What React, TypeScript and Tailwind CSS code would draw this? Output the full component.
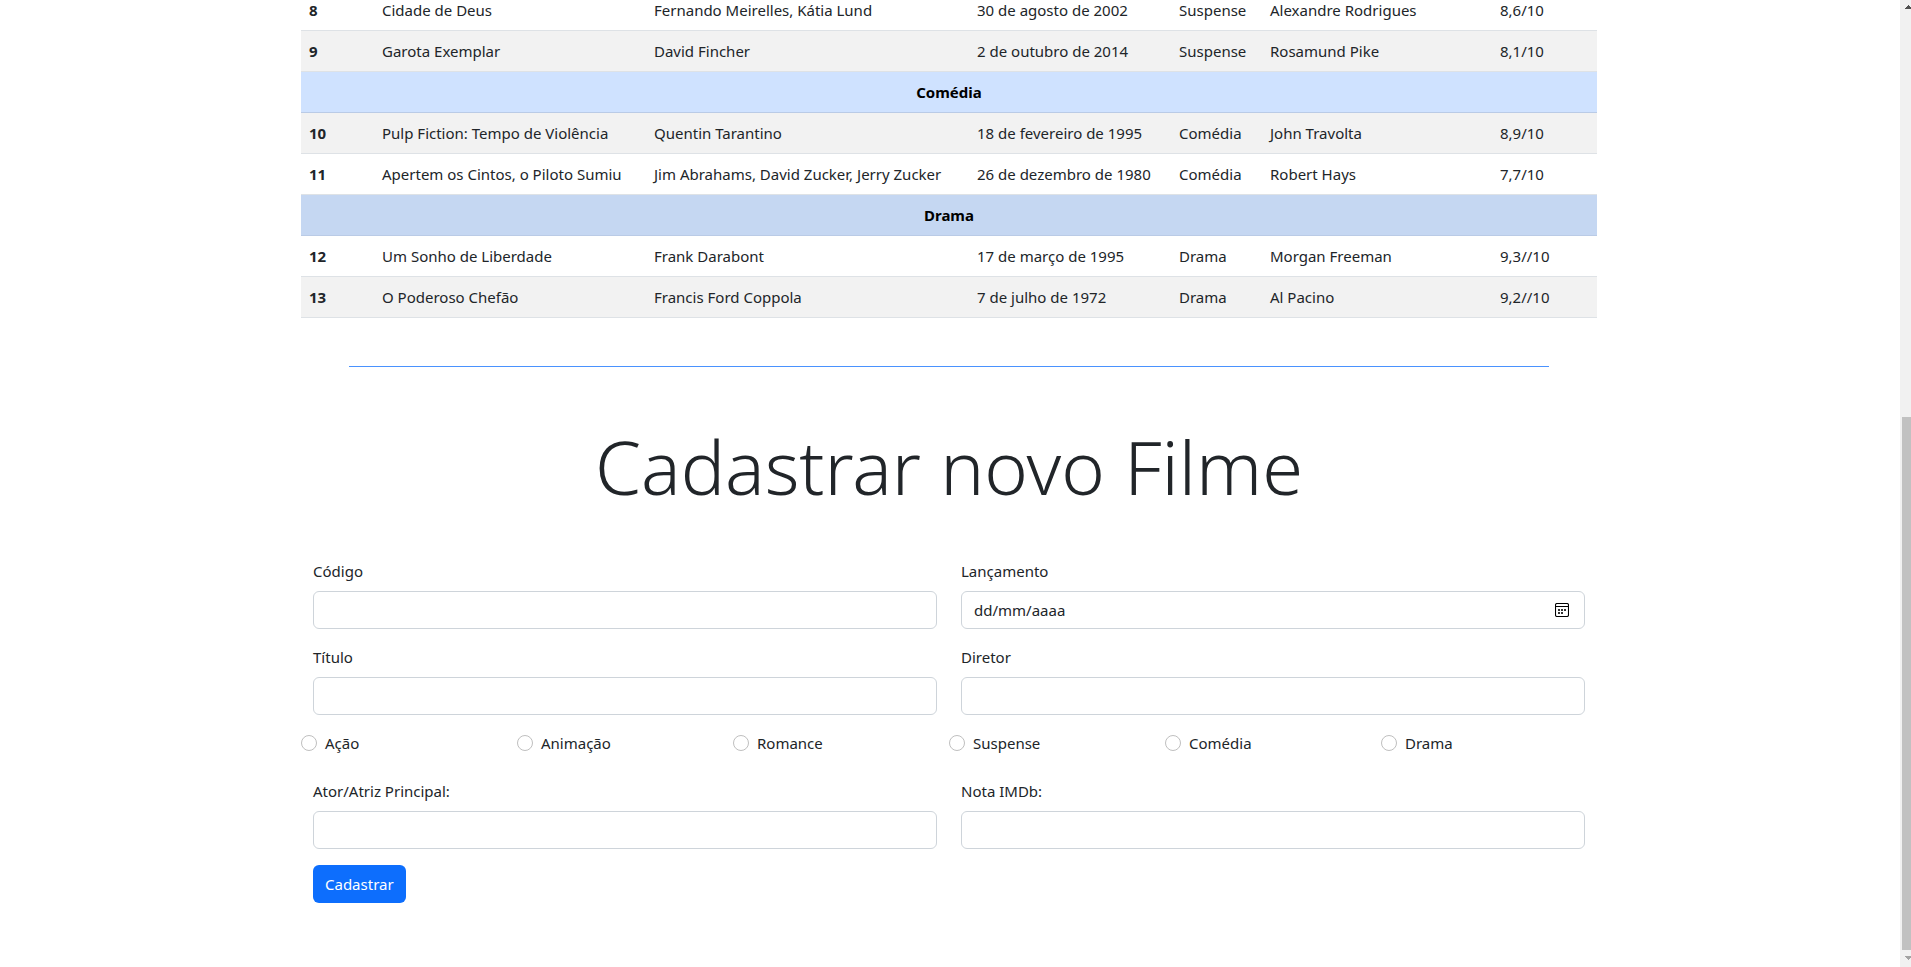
import React from "react";

type Movie = {
  code: string;
  title: string;
  director: string;
  release: string;
  genre: string;
  actor: string;
  rating: string;
};

type Group = { heading?: string; headingClass?: string; movies: Movie[]; stripe: number };

const groups: Group[] = [
  {
    stripe: 1,
    movies: [
      { code: "8", title: "Cidade de Deus", director: "Fernando Meirelles, Kátia Lund", release: "30 de agosto de 2002", genre: "Suspense", actor: "Alexandre Rodrigues", rating: "8,6/10" },
      { code: "9", title: "Garota Exemplar", director: "David Fincher", release: "2 de outubro de 2014", genre: "Suspense", actor: "Rosamund Pike", rating: "8,1/10" },
    ],
  },
  {
    heading: "Comédia",
    headingClass: "bg-[#cfe2ff]",
    stripe: 0,
    movies: [
      { code: "10", title: "Pulp Fiction: Tempo de Violência", director: "Quentin Tarantino", release: "18 de fevereiro de 1995", genre: "Comédia", actor: "John Travolta", rating: "8,9/10" },
      { code: "11", title: "Apertem os Cintos, o Piloto Sumiu", director: "Jim Abrahams, David Zucker, Jerry Zucker", release: "26 de dezembro de 1980", genre: "Comédia", actor: "Robert Hays", rating: "7,7/10" },
    ],
  },
  {
    heading: "Drama",
    headingClass: "bg-[#c5d7f2]",
    stripe: 1,
    movies: [
      { code: "12", title: "Um Sonho de Liberdade", director: "Frank Darabont", release: "17 de março de 1995", genre: "Drama", actor: "Morgan Freeman", rating: "9,3//10" },
      { code: "13", title: "O Poderoso Chefão", director: "Francis Ford Coppola", release: "7 de julho de 1972", genre: "Drama", actor: "Al Pacino", rating: "9,2//10" },
    ],
  },
];

const genres = ["Ação", "Animação", "Romance", "Suspense", "Comédia", "Drama"];

const inputClass =
  "block h-[38px] w-full rounded-md border border-[#ced4da] bg-white px-3 text-[#212529] placeholder:text-[#212529] outline-none focus:border-[#86b7fe]";

function MovieTable() {
  return (
    <table className="-mt-2.5 w-full table-fixed border-separate border-spacing-0 whitespace-nowrap text-left">
      <colgroup>
        <col className="w-[73px]" />
        <col className="w-[272px]" />
        <col className="w-[323px]" />
        <col className="w-[202px]" />
        <col className="w-[91px]" />
        <col className="w-[230px]" />
        <col />
      </colgroup>
      {groups.map((group, i) => (
        <tbody key={i}>
          {group.heading && (
            <tr className={group.headingClass}>
              <th colSpan={7} scope="rowgroup" className="h-[41px] border-b border-[#bacbe6] px-2 text-center font-bold text-black">
                {group.heading}
              </th>
            </tr>
          )}
          {group.movies.map((m, j) => (
            <tr key={m.code} className={j === group.stripe ? "bg-[#f2f2f2]" : "bg-white"}>
              <th scope="row" className="h-[41px] border-b border-[#dee2e6] px-2 font-bold">{m.code}</th>
              <td className="border-b border-[#dee2e6] px-2">{m.title}</td>
              <td className="border-b border-[#dee2e6] px-2">{m.director}</td>
              <td className="border-b border-[#dee2e6] px-2">{m.release}</td>
              <td className="border-b border-[#dee2e6] px-2">{m.genre}</td>
              <td className="border-b border-[#dee2e6] px-2">{m.actor}</td>
              <td className="border-b border-[#dee2e6] px-2">{m.rating}</td>
            </tr>
          ))}
        </tbody>
      ))}
    </table>
  );
}

function Field({ id, label }: { id: string; label: string }) {
  return (
    <div>
      <label htmlFor={id} className="mb-2 block">{label}</label>
      <input id={id} type="text" className={inputClass} />
    </div>
  );
}

function CalendarIcon() {
  return (
    <svg viewBox="0 0 14 14" className="size-3.5" fill="none" aria-hidden="true">
      <rect x="0.5" y="0.5" width="13" height="13" rx="1.5" stroke="#000" strokeWidth="1.1" />
      <path d="M1 3.5h12" stroke="#000" />
      <path d="M3 6h2v2H3zM6 6h2v2H6zM9 6h2v2H9zM3 9h2v2H3zM6 9h2v2H6z" fill="#333" />
    </svg>
  );
}

function DateField() {
  return (
    <div>
      <label htmlFor="lancamento" className="mb-2 block">Lançamento</label>
      <div className="relative">
        <input id="lancamento" type="text" inputMode="numeric" placeholder="dd/mm/aaaa" className={inputClass} />
        <button type="button" aria-label="Abrir calendário" className="absolute inset-y-0 right-4 flex items-center">
          <CalendarIcon />
        </button>
      </div>
    </div>
  );
}

function MovieForm() {
  return (
    <form onSubmit={(e) => e.preventDefault()}>
      <div className="grid grid-cols-2 gap-x-6 gap-y-4 px-3">
        <Field id="codigo" label="Código" />
        <DateField />
        <Field id="titulo" label="Título" />
        <Field id="diretor" label="Diretor" />
      </div>
      <div role="radiogroup" aria-label="Gênero" className="mt-4 mb-6 grid grid-cols-6">
        {genres.map((g) => (
          <label key={g} className="flex items-center gap-2">
            <input
              type="radio"
              name="genero"
              value={g}
              className="size-4 appearance-none rounded-full border border-[#bfbfbf] bg-white checked:border-[5px] checked:border-[#0d6efd]"
            />
            {g}
          </label>
        ))}
      </div>
      <div className="grid grid-cols-2 gap-x-6 px-3">
        <Field id="ator" label="Ator/Atriz Principal:" />
        <Field id="nota" label="Nota IMDb:" />
      </div>
      <div className="mt-4 px-3">
        <button type="submit" className="h-[38px] rounded-md bg-[#0d6efd] px-3 text-white">
          Cadastrar
        </button>
      </div>
    </form>
  );
}

function Scrollbar() {
  return (
    <div aria-hidden="true" className="flex w-[11px] shrink-0 flex-col overflow-hidden bg-[#f1f1f1]">
      <svg viewBox="0 0 17 17" className="h-[17px] w-[17px] shrink-0" shapeRendering="crispEdges">
        <path d="M8 5h1v1h1v1h1v1h1v1H5V8h1V7h1V6h1z" fill="#505050" />
      </svg>
      <div className="grow-[400]" />
      <div className="ml-0.5 grow-[533] bg-[#c1c1c1]" />
      <svg viewBox="0 0 17 17" className="h-[17px] w-[17px] shrink-0" shapeRendering="crispEdges">
        <path d="M5 6h7v1h-1v1h-1v1H9v1H8V9H7V8H6V7H5z" fill="#a3a3a3" />
      </svg>
    </div>
  );
}

export default function App() {
  return (
    <div className="flex h-screen overflow-hidden bg-white font-['Noto_Sans','Open_Sans',sans-serif] text-[15px] leading-6 text-[#212529]">
      <div className="grow overflow-hidden pr-0.5">
        <main className="mx-auto max-w-[1320px] px-3">
          <MovieTable />
          <hr className="m-12 border-[#4a92fe]" />
          <h1 className="mb-10 text-center text-[74px] leading-[104px] font-light">Cadastrar novo Filme</h1>
          <MovieForm />
        </main>
      </div>
      <Scrollbar />
    </div>
  );
}
